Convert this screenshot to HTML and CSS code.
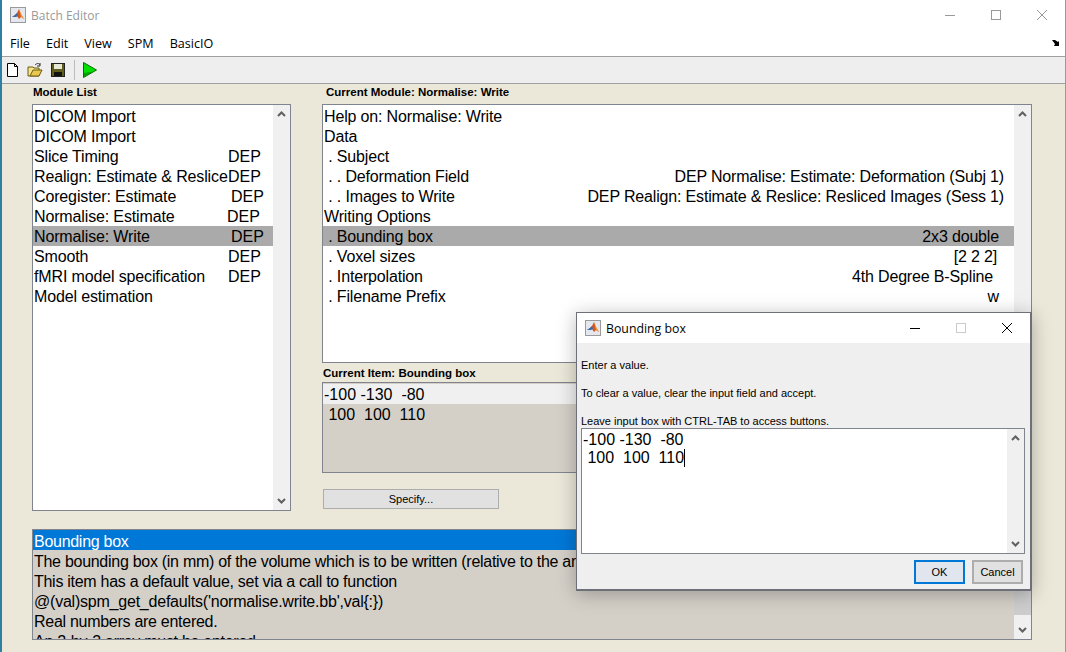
FILE: index.html
```html
<!DOCTYPE html>
<html>
<head>
  <title>Batch Editor</title>
  <link rel="stylesheet" href="styles.css">
</head>
<body>
  <div class="window">
    <header class="titlebar">
      <svg class="app-icon" width="16" height="16" viewBox="0 0 16 16"><rect x="0.5" y="0.5" width="15" height="15" fill="#e4e8ee" stroke="#9a9a9a"/><path d="M2 10l3-2 2-2 2-4 2 5 3 5-3-2-2 2-2-3z" fill="#d9541e"/><path d="M2 10l3-2 2-2 1 3-2 1z" fill="#2f6fb0"/><path d="M9 2l2 5 3 5-3-2z" fill="#f0a030"/></svg>
      <span class="title-text">Batch Editor</span>
      <div class="win-btns inactive">
        <span class="win-btn"><svg width="12" height="12" viewBox="0 0 12 12"><path d="M1 6.500h10" stroke="currentColor"/></svg></span>
        <span class="win-btn"><svg width="12" height="12" viewBox="0 0 12 12"><rect x="1.500" y="1.500" width="9" height="9" fill="none" stroke="currentColor"/></svg></span>
        <span class="win-btn"><svg width="12" height="12" viewBox="0 0 12 12"><path d="M1 1l10 10M11 1L1 11" stroke="currentColor"/></svg></span>
      </div>
    </header>

    <nav class="menubar">
      <a href="#">File</a>
      <a href="#">Edit</a>
      <a href="#">View</a>
      <a href="#">SPM</a>
      <a href="#">BasicIO</a>
      <svg class="menu-arrow" width="9" height="8" viewBox="0 0 9 8"><path d="M0 1h3l3 2 1-1v5H2l1-2z" fill="#000"/></svg>
    </nav>

    <div class="toolbar">
      <svg width="16" height="16" viewBox="0 0 16 16"><path d="M3.500 1.500h7l3 3v10h-10z" fill="#fff" stroke="#000"/><path d="M10.500 1.500v3h3" fill="none" stroke="#000"/></svg>
      <svg width="16" height="16" viewBox="0 0 16 16"><path d="M1 5h5l1 1h5v8H1z" fill="#f5e48a" stroke="#6b5a10"/><path d="M3 14l3-6h9l-3 6z" fill="#e8c850" stroke="#6b5a10"/><path d="M8 3c2-2 4-2 5 0" fill="none" stroke="#333"/><path d="M13 1v3h-3" fill="none" stroke="#333"/></svg>
      <svg width="16" height="16" viewBox="0 0 16 16"><rect x="1.500" y="1.500" width="13" height="13" fill="#5f5c1c" stroke="#222"/><rect x="4" y="2" width="8" height="5" fill="#e8e8d8"/><rect x="4" y="10" width="8" height="4" fill="#111"/></svg>
      <span class="tool-sep"></span>
      <svg width="16" height="18" viewBox="0 0 16 18"><path d="M1.500 1.500l13 7.500-13 7.500z" fill="#00e000" stroke="#0a6a0a"/><path d="M2 12l9-1.500-9 5.500z" fill="#00a000"/></svg>
    </div>

    <main class="panel">
      <section class="col">
        <div class="label label-list">Module List</div>
        <div class="box list-box">
          <div class="rows">
            <div class="mod">DICOM Import</div>
            <div class="mod">DICOM Import</div>
            <div class="mod">Slice Timing<span class="dep">DEP</span></div>
            <div class="mod">Realign: Estimate &amp; Reslice<span class="dep">DEP</span></div>
            <div class="mod">Coregister: Estimate<span class="dep dep-late">DEP</span></div>
            <div class="mod">Normalise: Estimate<span class="dep dep-early">DEP</span></div>
            <div class="mod selected">Normalise: Write<span class="dep dep-late">DEP</span></div>
            <div class="mod">Smooth<span class="dep">DEP</span></div>
            <div class="mod">fMRI model specification<span class="dep">DEP</span></div>
            <div class="mod">Model estimation</div>
          </div>
          <div class="scrollbar">
            <svg class="chev" width="9" height="6" viewBox="0 0 9 6"><path d="M1 5l3.500-3.500L8 5" fill="none" stroke="#606060" stroke-width="2"/></svg>
            <svg class="chev" width="9" height="6" viewBox="0 0 9 6"><path d="M1 1l3.500 3.500L8 1" fill="none" stroke="#606060" stroke-width="2"/></svg>
          </div>
        </div>
      </section>

      <section class="col">
        <div class="label label-module">Current Module: Normalise: Write</div>
        <div class="box help-box">
          <div class="rows">
            <div class="opt">Help on: Normalise: Write</div>
            <div class="opt">Data</div>
            <div class="opt">&nbsp;. Subject</div>
            <div class="opt">&nbsp;. . Deformation Field<span>DEP Normalise: Estimate: Deformation (Subj 1)</span></div>
            <div class="opt">&nbsp;. . Images to Write<span>DEP Realign: Estimate &amp; Reslice: Resliced Images (Sess 1)</span></div>
            <div class="opt">Writing Options</div>
            <div class="opt selected pad-15">&nbsp;. Bounding box<span>2x3 double</span></div>
            <div class="opt pad-17">&nbsp;. Voxel sizes<span>[2 2 2]</span></div>
            <div class="opt pad-21">&nbsp;. Interpolation<span>4th Degree B-Spline</span></div>
            <div class="opt pad-15">&nbsp;. Filename Prefix<span>w</span></div>
          </div>
          <div class="scrollbar">
            <svg class="chev" width="9" height="6" viewBox="0 0 9 6"><path d="M1 5l3.500-3.500L8 5" fill="none" stroke="#606060" stroke-width="2"/></svg>
          </div>
        </div>
        <div class="label label-item">Current Item: Bounding box</div>
        <div class="box item-box">
          <div class="item-row item-row-current">-100 -130  -80</div>
          <div class="item-row"> 100  100  110</div>
        </div>
        <button class="specify">Specify...</button>
      </section>

      <section class="box info-box">
        <div class="rows">
          <div class="info-row info-head">Bounding box</div>
          <div class="info-row">The bounding box (in mm) of the volume which is to be written (relative to the anterior commissure).</div>
          <div class="info-row">This item has a default value, set via a call to function</div>
          <div class="info-row info-code">@(val)spm_get_defaults('normalise.write.bb',val{:})</div>
          <div class="info-row">Real numbers are entered.</div>
          <div class="info-row">An 2-by-3 array must be entered.</div>
        </div>
        <div class="scrollbar">
          <span class="thumb"></span>
          <svg class="chev" width="9" height="6" viewBox="0 0 9 6"><path d="M1 1l3.500 3.500L8 1" fill="none" stroke="#606060" stroke-width="2"/></svg>
        </div>
      </section>
    </main>

    <div class="dialog">
      <header class="dlg-title">
        <svg class="app-icon" width="16" height="16" viewBox="0 0 16 16"><rect x="0.5" y="0.5" width="15" height="15" fill="#e4e8ee" stroke="#9a9a9a"/><path d="M2 10l3-2 2-2 2-4 2 5 3 5-3-2-2 2-2-3z" fill="#d9541e"/><path d="M2 10l3-2 2-2 1 3-2 1z" fill="#2f6fb0"/><path d="M9 2l2 5 3 5-3-2z" fill="#f0a030"/></svg>
        <span class="dlg-name">Bounding box</span>
        <div class="win-btns">
          <span class="win-btn"><svg width="12" height="12" viewBox="0 0 12 12"><path d="M1 6.500h10" stroke="#000"/></svg></span>
          <span class="win-btn"><svg width="12" height="12" viewBox="0 0 12 12"><rect x="1.500" y="1.500" width="9" height="9" fill="none" stroke="#ccc"/></svg></span>
          <span class="win-btn"><svg width="12" height="12" viewBox="0 0 12 12"><path d="M1 1l10 10M11 1L1 11" stroke="#000"/></svg></span>
        </div>
      </header>
      <div class="dlg-body">
        <p>Enter a value.</p>
        <p>To clear a value, clear the input field and accept.</p>
        <p>Leave input box with CTRL-TAB to access buttons.</p>
        <div class="dlg-input">
          <div class="rows">
            <div class="item-row">-100 -130  -80</div>
            <div class="item-row"> 100  100  110<span class="caret"></span></div>
          </div>
          <div class="scrollbar">
            <svg class="chev" width="9" height="6" viewBox="0 0 9 6"><path d="M1 5l3.500-3.500L8 5" fill="none" stroke="#606060" stroke-width="2"/></svg>
            <svg class="chev" width="9" height="6" viewBox="0 0 9 6"><path d="M1 1l3.500 3.500L8 1" fill="none" stroke="#606060" stroke-width="2"/></svg>
          </div>
        </div>
        <div class="dlg-actions">
          <button class="btn btn-default">OK</button>
          <button class="btn">Cancel</button>
        </div>
      </div>
    </div>
  </div>
</body>
</html>
```

FILE: styles.css
```css
html, body {
  margin: 0;
  padding: 0;
}
body {
  font-family: "Liberation Sans", Arial, sans-serif;
  color: #000;
}
.window {
  position: relative;
  width: 1066px;
  height: 652px;
  box-sizing: border-box;
  border-left: 2px solid #2f7fa3;
  border-right: 1px solid #9a9a9a;
  background: #ebe8d9;
  overflow: hidden;
  display: flex;
  flex-direction: column;
}
.titlebar {
  height: 32px;
  flex: none;
  box-sizing: border-box;
  padding: 0 0 2px 8px;
  background: #fff;
  display: flex;
  align-items: center;
}
.title-text {
  margin-left: 5px;
  font: 12px "Open Sans", sans-serif;
  color: #999;
}
.win-btns {
  margin-left: auto;
  display: flex;
}
.win-btns.inactive {
  color: #999;
}
.win-btn {
  width: 46px;
  height: 30px;
  display: flex;
  align-items: center;
  justify-content: center;
}
.menubar {
  height: 25px;
  flex: none;
  box-sizing: border-box;
  background: #fff;
  border-bottom: 1px solid #a0a0a0;
  display: flex;
  align-items: center;
  padding: 0 0 2px 8px;
  gap: 16px;
}
.menubar a {
  font: 12.6px "Open Sans", sans-serif;
  color: #000;
  text-decoration: none;
}
.menu-arrow {
  margin-left: auto;
  margin-right: 4px;
}
.toolbar {
  height: 27px;
  flex: none;
  box-sizing: border-box;
  background: #eee;
  border-bottom: 1px solid #a0a0a0;
  display: flex;
  align-items: center;
  padding-left: 2px;
  gap: 7px;
}
.tool-sep {
  width: 1px;
  height: 20px;
  background: #bbb;
  margin-left: 1px;
}
.panel {
  flex: 1;
  padding-left: 30px;
  display: grid;
  grid-template-columns: 259px 710px;
  grid-template-rows: 427px 111px;
  column-gap: 31px;
  row-gap: 18px;
}
.col {
  display: flex;
  flex-direction: column;
  min-width: 0;
}
.label {
  height: 20px;
  line-height: 16px;
  font-size: 11.5px;
  font-weight: bold;
  white-space: nowrap;
}
.label-list {
  padding-left: 1px;
}
.label-module {
  padding-left: 4px;
}
.label-item {
  height: 19px;
  line-height: 20px;
  padding-left: 1px;
}
.box {
  box-sizing: border-box;
  border: 1px solid #7f848f;
  background: #fff;
  display: flex;
  overflow: hidden;
}
.rows {
  flex: 1;
  min-width: 0;
  padding-top: 1px;
  overflow: hidden;
}
.scrollbar {
  width: 17px;
  flex: none;
  background: #f0f0f0;
  display: flex;
  flex-direction: column;
  align-items: center;
  justify-content: space-between;
  padding: 6px 0;
  box-sizing: border-box;
}
.chev {
  flex: none;
}
.list-box {
  height: 407px;
}
.mod, .opt, .item-row, .info-row {
  height: 20px;
  line-height: 22px;
  font-size: 16px;
  padding-left: 1px;
  white-space: nowrap;
}
.mod {
  display: grid;
  grid-template-columns: 194px auto;
  justify-content: start;
  letter-spacing: -0.14px;
}
.dep {
  letter-spacing: 0;
}
.dep-late {
  margin-left: 3px;
}
.dep-early {
  margin-left: -1px;
}
.selected {
  background: #aaa;
}
.help-box {
  height: 259px;
}
.opt {
  display: flex;
  justify-content: space-between;
  padding-right: 10px;
  letter-spacing: -0.16px;
}
.pad-15 {
  padding-right: 15px;
}
.pad-17 {
  padding-right: 17px;
}
.pad-21 {
  padding-right: 21px;
}
.item-box {
  height: 91px;
  background: #d4d0c8;
  display: block;
  padding-top: 1px;
}
.item-row {
  white-space: pre;
}
.item-row-current {
  background: #f0f0f0;
}
.specify {
  width: 176px;
  height: 20px;
  margin: 16px 0 0 1px;
  padding: 0;
  background: #e1e1e1;
  border: 1px solid #adadad;
  font: 11px "Liberation Sans", sans-serif;
  color: #000;
}
.info-box {
  grid-column: 1 / span 2;
  height: 111px;
  background: #d4d0c8;
}
.info-box .rows {
  padding-top: 0;
}
.info-row {
  line-height: 24px;
  letter-spacing: -0.28px;
}
.info-code {
  letter-spacing: -0.22px;
}
.info-head {
  background: #0078d7;
  color: #fff;
}
.info-box .scrollbar {
  padding: 0 0 6px;
}
.thumb {
  width: 17px;
  height: 85px;
  background: #cdcdcd;
}
.dialog {
  position: absolute;
  left: 574px;
  top: 312px;
  width: 456px;
  height: 279px;
  box-sizing: border-box;
  border: 1px solid #6e7079;
  border-width: 1px 2px 2px 1px;
  background: #efefef;
  box-shadow: 0 3px 18px rgba(0, 0, 0, 0.28);
  display: flex;
  flex-direction: column;
}
.dlg-title {
  height: 30px;
  flex: none;
  background: #fff;
  display: flex;
  align-items: center;
  padding-left: 8px;
}
.dlg-name {
  margin-left: 5px;
  font: 12.3px "Open Sans", sans-serif;
}
.dlg-body {
  flex: 1;
  padding: 0 5px 0 4px;
  display: flex;
  flex-direction: column;
}
.dlg-body p {
  margin: 0;
  height: 28px;
  line-height: 44px;
  font-size: 11px;
  white-space: nowrap;
}
.dlg-input {
  height: 126px;
  margin-top: 1px;
  box-sizing: border-box;
  border: 1px solid #7f848f;
  background: #fff;
  display: flex;
}
.dlg-input .item-row {
  height: 18px;
  line-height: 20px;
}
.caret {
  display: inline-block;
  width: 1px;
  height: 18px;
  background: #000;
  vertical-align: -4px;
}
.dlg-actions {
  display: flex;
  justify-content: flex-end;
  gap: 7px;
  margin-top: 6px;
  padding-right: 2px;
}
.btn {
  width: 51px;
  height: 24px;
  padding: 0;
  background: #e1e1e1;
  border: 2px solid #adadad;
  font: 11px "Liberation Sans", sans-serif;
  color: #000;
}
.btn-default {
  background: #e1e6ee;
  border-color: #0078d7;
}
```
